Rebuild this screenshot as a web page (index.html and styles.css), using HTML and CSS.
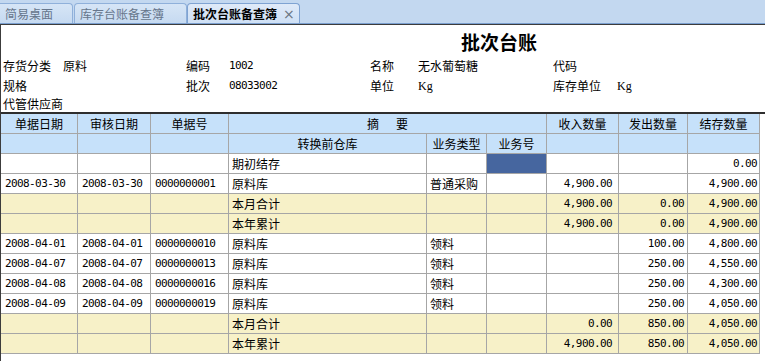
FILE: index.html
```html
<!DOCTYPE html>
<html lang="zh-CN">
<head>
<meta charset="utf-8">
<title>批次台账备查簿</title>
<link rel="stylesheet" href="styles.css">
</head>
<body>
<div class="tabs">
  <div class="tab t1">简易桌面</div>
  <div class="tab t2">库存台账备查簿</div>
  <div class="tab t3 active">批次台账备查簿<span class="close">×</span></div>
</div>
<div class="content">
  <div class="title">批次台账</div>
  <div class="info">
    <div class="r1">存货分类</div><div class="r1">原料</div>
    <div class="r1">编码</div><div class="r1 num">1002</div>
    <div class="r1">名称</div><div class="r1">无水葡萄糖</div>
    <div class="r1">代码</div><div class="r1"></div>

    <div class="r2">规格</div><div class="r2"></div>
    <div class="r2">批次</div><div class="r2 num">08033002</div>
    <div class="r2">单位</div><div class="r2 unit">Kg</div>
    <div class="r2">库存单位</div><div class="r2 unit">Kg</div>

    <div class="r3 span2">代管供应商</div>
  </div>
  <div class="grid">
    <div class="c h h1">单据日期</div>
    <div class="c h h1">审核日期</div>
    <div class="c h h1">单据号</div>
    <div class="c h h1 zy">摘要</div>
    <div class="c h h1">收入数量</div>
    <div class="c h h1">发出数量</div>
    <div class="c h h1">结存数量</div>

    <div class="c h h2"></div>
    <div class="c h h2"></div>
    <div class="c h h2"></div>
    <div class="c h h2">转换前仓库</div>
    <div class="c h h2">业务类型</div>
    <div class="c h h2">业务号</div>
    <div class="c h h2"></div>
    <div class="c h h2"></div>
    <div class="c h h2"></div>

    <div class="c"></div><div class="c"></div><div class="c"></div>
    <div class="c txt">期初结存</div><div class="c"></div><div class="c sel"></div>
    <div class="c"></div><div class="c"></div><div class="c n n3">0.00</div>

    <div class="c m">2008-03-30</div><div class="c m">2008-03-30</div><div class="c m">0000000001</div>
    <div class="c txt">原料库</div><div class="c txt">普通采购</div><div class="c"></div>
    <div class="c n n1">4,900.00</div><div class="c"></div><div class="c n n3">4,900.00</div>

    <div class="c y"></div><div class="c y"></div><div class="c y"></div>
    <div class="c y txt">本月合计</div><div class="c y"></div><div class="c y"></div>
    <div class="c y n n1">4,900.00</div><div class="c y n n2">0.00</div><div class="c y n n3">4,900.00</div>

    <div class="c y"></div><div class="c y"></div><div class="c y"></div>
    <div class="c y txt">本年累计</div><div class="c y"></div><div class="c y"></div>
    <div class="c y n n1">4,900.00</div><div class="c y n n2">0.00</div><div class="c y n n3">4,900.00</div>

    <div class="c m">2008-04-01</div><div class="c m">2008-04-01</div><div class="c m">0000000010</div>
    <div class="c txt">原料库</div><div class="c txt">领料</div><div class="c"></div>
    <div class="c"></div><div class="c n n2">100.00</div><div class="c n n3">4,800.00</div>

    <div class="c m">2008-04-07</div><div class="c m">2008-04-07</div><div class="c m">0000000013</div>
    <div class="c txt">原料库</div><div class="c txt">领料</div><div class="c"></div>
    <div class="c"></div><div class="c n n2">250.00</div><div class="c n n3">4,550.00</div>

    <div class="c m">2008-04-08</div><div class="c m">2008-04-08</div><div class="c m">0000000016</div>
    <div class="c txt">原料库</div><div class="c txt">领料</div><div class="c"></div>
    <div class="c"></div><div class="c n n2">250.00</div><div class="c n n3">4,300.00</div>

    <div class="c m">2008-04-09</div><div class="c m">2008-04-09</div><div class="c m">0000000019</div>
    <div class="c txt">原料库</div><div class="c txt">领料</div><div class="c"></div>
    <div class="c"></div><div class="c n n2">250.00</div><div class="c n n3">4,050.00</div>

    <div class="c y"></div><div class="c y"></div><div class="c y"></div>
    <div class="c y txt">本月合计</div><div class="c y"></div><div class="c y"></div>
    <div class="c y n n1">0.00</div><div class="c y n n2">850.00</div><div class="c y n n3">4,050.00</div>

    <div class="c y"></div><div class="c y"></div><div class="c y"></div>
    <div class="c y txt">本年累计</div><div class="c y"></div><div class="c y"></div>
    <div class="c y n n1">4,900.00</div><div class="c y n n2">850.00</div><div class="c y n n3">4,050.00</div>
  </div>
</div>
</body>
</html>
```

FILE: styles.css
```css
* { box-sizing: border-box; }
html, body { margin: 0; padding: 0; }
body {
  width: 765px;
  height: 361px;
  overflow: hidden;
  background: #ffffff;
  font-family: "Noto Sans CJK SC", "Noto Sans", sans-serif;
  font-size: 12px;
  color: #000;
}

/* ---------- tab strip ---------- */
.tabs {
  height: 24px;
  background: #c3d8f0;
  border-bottom: 1px solid #7a9fcf;
  display: flex;
  align-items: flex-end;
}
.tab {
  height: 20px;
  line-height: 19px;
  padding-left: 5px;
  color: #66768c;
  background: linear-gradient(#d6e5f6, #c6daf1);
  border: 1px solid #8fb0da;
  border-bottom: none;
  border-radius: 0 4px 0 0;
  white-space: nowrap;
}
.t1 { width: 73px; border-left: none; }
.t2 { width: 113px; margin-left: 1px; border-radius: 4px 4px 0 0; }
.t3 { width: 113px; border-radius: 4px 4px 0 0; }
.tab.active {
  color: #000;
  font-weight: bold;
  background: linear-gradient(#dfeaf8, #cfe0f5);
  border-color: #7fa3d2;
  display: flex;
  align-items: center;
  gap: 6px;
  line-height: 18px;
}
.close {
  font-weight: normal;
  color: #6a7480;
  font-size: 14px;
  font-family: "DejaVu Sans", sans-serif;
}

/* ---------- content ---------- */
.content {
  border-top: 1px solid #3c3c3c;
  border-left: 1px solid #3c3c3c;
  height: 337px;
}
.title {
  height: 31px;
  padding-top: 7px;
  padding-left: 460px;
  font-size: 19px;
  line-height: 20px;
  font-weight: bold;
}
.info {
  display: grid;
  grid-template-columns: 60px 123px 43px 141px 48px 135px 64px 1fr;
  grid-template-rows: 20px 20px 16px;
  padding-left: 2px;
  line-height: 20px;
}
.info .r3 { line-height: 16px; }
.info .span2 { grid-column: span 2; }
.info .num {
  font-family: "DejaVu Sans Mono", monospace;
  font-size: 11px;
  letter-spacing: -0.6px;
}
.info .unit {
  font-family: "Liberation Serif", serif;
  font-size: 12px;
}

/* ---------- grid ---------- */
.grid {
  display: grid;
  grid-template-columns: 77px 73px 78px 198px 60px 60px 72px 69px 72px;
  grid-template-rows: 20px 20px repeat(10, 20px);
  border-top: 2px solid #2e2e2e;
  width: 764px;
}
.c {
  border-right: 1px solid #a6a6a6;
  border-bottom: 1px solid #a6a6a6;
  line-height: 19px;
  white-space: nowrap;
  overflow: hidden;
}
.h {
  background: #c6e1fa;
  text-align: center;
}
.h1 { line-height: 19px; }
.zy {
  grid-column: span 3;
  letter-spacing: 17px;
  text-indent: 17px;
}
.y { background: #f7f1c8; }
.sel { background: #46669f; }
.txt { padding-left: 3px; }
.m {
  padding-left: 4px;
  font-family: "DejaVu Sans Mono", monospace;
  font-size: 11px;
  letter-spacing: -0.6px;
}
.n {
  text-align: right;
  font-family: "DejaVu Sans Mono", monospace;
  font-size: 11px;
  letter-spacing: -0.6px;
}
.n1 { padding-right: 6px; }
.n2 { padding-right: 3px; }
.n3 { padding-right: 2px; }
```
